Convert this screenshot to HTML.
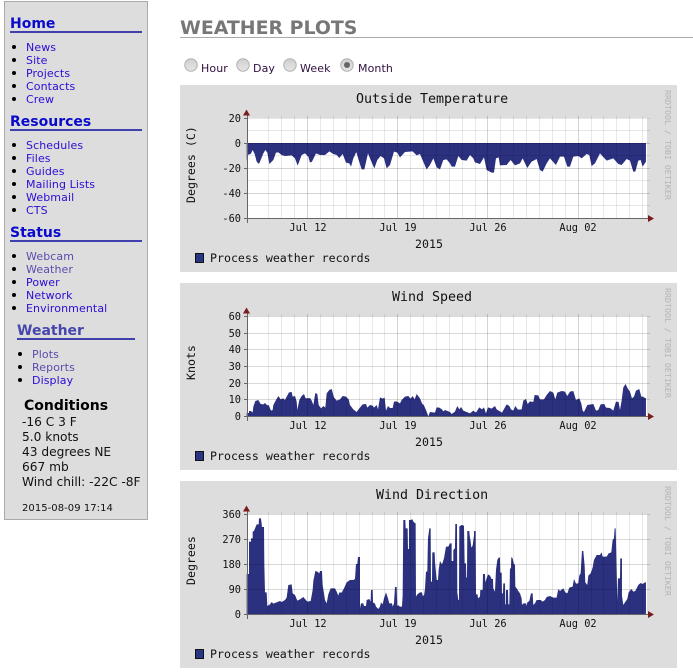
<!DOCTYPE html>
<html><head><meta charset="utf-8"><title>Weather Plots</title>
<style>
html,body{margin:0;padding:0;background:#fff;width:693px;height:672px;overflow:hidden}
body{position:relative;font-family:"DejaVu Sans","Liberation Sans",sans-serif;color:#111}
.t{position:absolute;white-space:nowrap;line-height:16px;font-size:11px;letter-spacing:.1px;margin-top:1px}
.l{color:#2a0cd6}.v{color:#5b4cae}
.h{font-weight:bold;font-size:14px;color:#0a0acb;letter-spacing:0}
.r{position:absolute;height:2px;background:#3f3fae}
.b{position:absolute;width:4px;height:4px;border-radius:50%;background:#000}
.c{font-size:12.2px;letter-spacing:0;color:#111}
svg{position:absolute;left:0;top:0}
svg text{font-family:"DejaVu Sans Mono","Liberation Mono",monospace;fill:#111}
</style></head><body>
<div style="position:absolute;left:4px;top:1px;width:142px;height:517px;background:#ddd;border:1px solid #aaa"></div>
<div class="t h" style="left:10px;top:15px">Home</div><div class="r" style="left:10px;top:31px;width:132px"></div>
<div class="b" style="left:12px;top:45px"></div><div class="t l" style="left:26px;top:39px">News</div>
<div class="b" style="left:12px;top:58px"></div><div class="t l" style="left:26px;top:52px">Site</div>
<div class="b" style="left:12px;top:71px"></div><div class="t l" style="left:26px;top:65px">Projects</div>
<div class="b" style="left:12px;top:84px"></div><div class="t l" style="left:26px;top:78px">Contacts</div>
<div class="b" style="left:12px;top:97px"></div><div class="t l" style="left:26px;top:91px">Crew</div>
<div class="t h" style="left:10px;top:113px">Resources</div><div class="r" style="left:10px;top:129px;width:132px"></div>
<div class="b" style="left:12px;top:143px"></div><div class="t l" style="left:26px;top:137px">Schedules</div>
<div class="b" style="left:12px;top:156px"></div><div class="t l" style="left:26px;top:150px">Files</div>
<div class="b" style="left:12px;top:169px"></div><div class="t l" style="left:26px;top:163px">Guides</div>
<div class="b" style="left:12px;top:182px"></div><div class="t l" style="left:26px;top:176px">Mailing Lists</div>
<div class="b" style="left:12px;top:195px"></div><div class="t l" style="left:26px;top:189px">Webmail</div>
<div class="b" style="left:12px;top:208px"></div><div class="t l" style="left:26px;top:202px">CTS</div>
<div class="t h" style="left:10px;top:224px">Status</div><div class="r" style="left:10px;top:240px;width:132px"></div>
<div class="b" style="left:12px;top:254px"></div><div class="t v" style="left:26px;top:248px">Webcam</div>
<div class="b" style="left:12px;top:267px"></div><div class="t v" style="left:26px;top:261px">Weather</div>
<div class="b" style="left:12px;top:280px"></div><div class="t l" style="left:26px;top:274px">Power</div>
<div class="b" style="left:12px;top:293px"></div><div class="t l" style="left:26px;top:287px">Network</div>
<div class="b" style="left:12px;top:306px"></div><div class="t l" style="left:26px;top:300px">Environmental</div>
<div class="t h" style="left:17px;top:322px;color:#4646ad">Weather</div><div class="r" style="left:17px;top:338px;width:118px"></div>
<div class="b" style="left:18px;top:352px"></div><div class="t v" style="left:32px;top:346px">Plots</div>
<div class="b" style="left:18px;top:365px"></div><div class="t v" style="left:32px;top:359px">Reports</div>
<div class="b" style="left:18px;top:378px"></div><div class="t l" style="left:32px;top:372px">Display</div>
<div class="t" style="left:24px;top:397px;font-weight:bold;font-size:14px;color:#000;letter-spacing:0">Conditions</div>
<div class="t c" style="left:22px;top:413px">-16 C 3 F</div>
<div class="t c" style="left:22px;top:428px">5.0 knots</div>
<div class="t c" style="left:22px;top:443px">43 degrees NE</div>
<div class="t c" style="left:22px;top:458px">667 mb</div>
<div class="t c" style="left:22px;top:473px">Wind chill: -22C -8F</div>
<div class="t" style="left:22px;top:500px;font-size:10px;letter-spacing:.05px">2015-08-09 17:14</div>

<div class="t" style="left:180px;top:18px;font-weight:bold;font-size:18.9px;line-height:18px;color:#777;letter-spacing:0">WEATHER PLOTS</div>
<div style="position:absolute;left:180px;top:37px;width:513px;height:1px;background:#aaa"></div>

<div class="t" style="left:201px;top:60px;color:#301040">Hour</div>
<div class="t" style="left:253px;top:60px;color:#301040">Day</div>
<div class="t" style="left:300px;top:60px;color:#301040">Week</div>
<div class="t" style="left:358px;top:60px;color:#301040">Month</div>

<svg width="693" height="672" viewBox="0 0 693 672">
<defs>
<linearGradient id="rg" x1="0" y1="0" x2="0" y2="1"><stop offset="0" stop-color="#cfcfcf"/><stop offset="1" stop-color="#e6e6e6"/></linearGradient>
<path id="vg1" fill="none" stroke="#000" stroke-opacity=".09" d="M268.5 0V102M281.5 0V102M294.5 0V102M320.5 0V102M333.5 0V102M346.5 0V102M359.5 0V102M372.5 0V102M384.5 0V102M410.5 0V102M423.5 0V102M436.5 0V102M449.5 0V102M462.5 0V102M475.5 0V102M500.5 0V102M513.5 0V102M526.5 0V102M539.5 0V102M552.5 0V102M565.5 0V102M591.5 0V102M603.5 0V102M616.5 0V102M629.5 0V102M642.5 0V102"/>
<path id="vg2" fill="none" stroke="#000" stroke-opacity=".17" d="M307.5 0V102M397.5 0V102M487.5 0V102M578.5 0V102"/>
<g id="axis">
<path d="M247.5 -4V105M244 100.5H649" stroke="#666" fill="none"/>
<path d="M243 -2.500L246.500 -8.500L250 -2.500ZM648 97L654 100.5L648 104Z" fill="#7a1c1c"/>
</g>
</defs>
<g stroke="#b0b0b0" fill="url(#rg)"><circle cx="191" cy="65" r="6.2"/><circle cx="243" cy="65" r="6.2"/><circle cx="290" cy="65" r="6.2"/><circle cx="347" cy="65" r="6.2"/></g>
<circle cx="347" cy="65" r="3" fill="#666"/>

<!-- PANEL 1 -->
<rect x="180" y="85" width="497" height="187" fill="#ddd"/>
<rect x="247" y="118" width="400" height="100" fill="#fff"/>
<polygon fill="#2b307f" transform="translate(240,130) scale(.3333)" points="20,39 20,95 22,75 32,72 38,60 44,72 50,95 57,102 62,90 70,70 76,60 82,68 88,102 100,90 108,68 115,67 125,75 135,78 155,76 165,85 173,107 185,75 195,70 205,80 210,98 216,95 228,70 240,75 255,75 268,64 280,72 290,75 298,84 308,72 318,98 328,100 333,110 340,85 349,66 356,90 365,118 373,118 384,70 392,90 403,115 412,90 422,78 432,85 440,115 450,105 462,65 472,68 480,82 495,66 518,64 530,76 540,72 552,100 560,118 570,105 580,85 590,112 600,118 610,90 620,88 630,100 635,110 645,110 655,78 665,90 680,92 690,75 700,85 705,97 720,102 732,82 740,120 755,128 762,128 768,85 776,82 780,106 800,105 812,90 825,106 840,100 848,85 862,114 875,95 890,87 900,120 908,125 920,100 930,85 948,105 960,80 972,80 982,110 990,110 1000,80 1015,78 1025,85 1040,72 1048,75 1055,108 1065,100 1080,70 1100,92 1120,85 1135,102 1145,105 1160,87 1170,92 1180,125 1186,125 1195,92 1202,90 1208,110 1218,95 1218,39"/>
<use href="#vg1" y="116"/><use href="#vg2" y="116"/>
<path fill="none" stroke="#000" stroke-opacity=".09" d="M247 118.5H650M247 130.5H650M247 155.5H650M247 180.5H650M247 205.5H650"/>
<path fill="none" stroke="#000" stroke-opacity=".17" d="M247 143.5H650M247 168.5H650M247 193.5H650"/>
<use href="#axis" y="118"/>
<path stroke="#666" d="M244 118.5H247M244 143.5H247M244 168.5H247M244 193.5H247"/>
<text x="356" y="103" font-size="13.3">Outside Temperature</text>
<g font-size="10.3" text-anchor="end"><text x="241" y="122">20</text><text x="241" y="147">0</text><text x="241" y="172">-20</text><text x="241" y="197">-40</text><text x="241" y="222">-60</text></g>
<g font-size="10.3" text-anchor="middle"><text x="308" y="231">Jul 12</text><text x="398" y="231">Jul 19</text><text x="488" y="231">Jul 26</text><text x="578" y="231">Aug 02</text></g>
<text x="415" y="248" font-size="11.6">2015</text>
<rect x="195.500" y="253.500" width="8" height="9" fill="#2b3585" stroke="#111"/>
<text x="210" y="262" font-size="11.6">Process weather records</text>
<text transform="translate(195,203) rotate(-90)" font-size="11.6">Degrees (C)</text>
<text transform="translate(665,90) rotate(90)" font-size="8.3" style="fill:#b4b4b4">RRDTOOL / TOBI OETIKER</text>

<!-- PANEL 2 -->
<rect x="180" y="283" width="497" height="187" fill="#ddd"/>
<rect x="247" y="316" width="400" height="100" fill="#fff"/>
<polygon fill="#2b307f" transform="translate(240,340) scale(.3333)" points="20,229 20,219 27,219 27,213 33,213 38,218 40,200 46,183 55,180 62,192 70,193 75,189 82,196 86,195 93,212 98,210 100,195 108,180 115,168 122,178 130,175 135,180 140,170 147,157 155,156 158,170 165,168 170,185 172,210 178,180 185,168 192,162 197,175 210,174 215,182 220,195 226,159 232,162 236,195 243,205 250,198 256,203 260,160 268,150 275,147 282,172 290,182 300,178 308,168 318,170 326,178 330,195 340,208 350,216 358,205 368,193 378,192 382,203 390,195 398,197 402,203 410,195 414,208 420,172 428,176 434,173 438,212 444,198 450,204 458,204 462,185 470,184 480,190 485,180 495,170 505,168 512,176 518,168 524,178 530,162 540,175 546,190 552,196 560,215 565,229 570,216 585,218 590,202 598,203 606,208 610,214 615,210 630,216 635,222 645,215 652,198 658,208 663,201 670,212 680,216 690,220 700,212 708,218 718,202 726,208 732,202 738,220 744,202 755,206 765,198 770,208 780,214 786,218 800,193 808,198 813,208 820,212 826,198 834,209 845,208 850,182 858,177 863,192 870,184 880,186 884,165 895,166 900,178 912,178 920,165 930,153 940,158 946,178 952,158 965,153 975,155 982,168 990,155 1000,153 1008,180 1018,175 1024,190 1028,212 1032,216 1042,195 1060,192 1068,212 1075,210 1082,193 1093,192 1098,203 1110,204 1120,212 1128,185 1136,186 1140,210 1145,182 1150,142 1157,132 1163,145 1170,155 1176,175 1182,170 1188,152 1198,147 1204,170 1208,170 1218,175 1218,229"/>
<use href="#vg1" y="314"/><use href="#vg2" y="314"/>
<path fill="none" stroke="#000" stroke-opacity=".15" d="M247 316.500H650M247 333.500H650M247 349.500H650M247 366.500H650M247 383.500H650M247 399.500H650"/>
<use href="#axis" y="316"/>
<path stroke="#666" d="M244 316.500H247M244 333.500H247M244 349.500H247M244 366.500H247M244 383.500H247M244 399.500H247"/>
<text x="392" y="301" font-size="13.3">Wind Speed</text>
<g font-size="10.3" text-anchor="end"><text x="241" y="320">60</text><text x="241" y="337">50</text><text x="241" y="353">40</text><text x="241" y="370">30</text><text x="241" y="387">20</text><text x="241" y="403">10</text><text x="241" y="420">0</text></g>
<g font-size="10.3" text-anchor="middle"><text x="308" y="429">Jul 12</text><text x="398" y="429">Jul 19</text><text x="488" y="429">Jul 26</text><text x="578" y="429">Aug 02</text></g>
<text x="415" y="446" font-size="11.6">2015</text>
<rect x="195.500" y="451.500" width="8" height="9" fill="#2b3585" stroke="#111"/>
<text x="210" y="460" font-size="11.6">Process weather records</text>
<text transform="translate(195,380) rotate(-90)" font-size="11.6">Knots</text>
<text transform="translate(665,288) rotate(90)" font-size="8.3" style="fill:#b4b4b4">RRDTOOL / TOBI OETIKER</text>

<!-- PANEL 3 -->
<rect x="180" y="481" width="497" height="187" fill="#ddd"/>
<rect x="247" y="514" width="400" height="100" fill="#fff"/>
<polygon fill="#2b307f" transform="translate(240,505) scale(.3333)" points="20,328 20,207 27,207 27,110 33,110 33,100 38,100 38,80 42,78 46,68 50,58 56,58 57,40 63,40 66,66 72,66 73,180 75,262 80,262 82,303 90,298 95,291 100,296 110,292 120,288 125,291 135,285 140,278 145,240 155,238 158,265 165,270 172,287 180,283 190,276 195,282 202,290 212,288 218,255 220,228 226,198 232,200 238,205 240,198 246,198 248,240 252,265 255,285 260,295 265,268 272,250 285,250 290,260 295,272 298,262 305,263 312,250 320,232 330,225 340,225 345,222 348,177 352,177 354,156 360,156 360,310 363,295 370,295 372,303 378,303 380,285 388,282 392,290 393,255 398,255 399,292 405,296 408,305 415,312 420,305 423,292 428,298 432,280 438,262 444,280 448,295 456,295 458,305 462,295 465,246 470,246 472,305 474,300 480,305 486,305 488,270 490,45 496,45 497,70 503,70 504,132 507,132 507,45 513,45 516,42 522,52 527,55 528,275 532,268 540,262 546,262 548,272 552,272 555,252 558,200 562,200 564,100 568,70 572,70 573,230 576,230 577,142 584,142 585,170 590,225 594,225 596,195 600,168 606,178 612,160 618,125 625,125 630,115 635,115 635,168 640,168 640,135 645,130 646,57 651,57 652,262 655,285 657,285 658,65 664,60 672,62 674,175 678,175 679,218 681,218 682,78 688,78 689,92 692,110 694,128 698,122 702,92 702,78 707,78 708,268 713,268 714,280 720,275 721,255 728,255 729,207 735,207 736,232 740,220 744,208 750,212 755,222 759,222 760,250 765,260 768,195 772,165 776,158 780,158 781,203 785,203 786,265 789,265 790,235 795,235 796,298 798,298 798,255 804,255 805,298 808,298 810,190 813,190 814,156 818,160 822,178 825,178 826,245 830,250 835,258 840,265 845,280 846,300 850,295 858,295 860,303 862,292 868,288 873,265 878,265 880,300 885,295 890,285 902,285 908,290 915,285 920,276 930,273 940,278 950,278 955,252 960,258 970,250 976,262 982,265 988,248 998,245 1002,222 1008,236 1015,235 1018,212 1022,205 1026,138 1030,138 1034,182 1036,232 1042,240 1045,212 1052,205 1058,188 1062,165 1070,150 1080,150 1085,142 1088,155 1100,155 1106,145 1114,142 1118,105 1122,100 1124,70 1127,70 1128,105 1132,288 1134,220 1140,220 1141,160 1146,160 1146,272 1150,300 1155,292 1162,282 1166,262 1174,252 1180,260 1186,258 1195,240 1202,234 1208,237 1215,232 1218,232 1218,328"/>
<use href="#vg1" y="512"/><use href="#vg2" y="512"/>
<path fill="none" stroke="#000" stroke-opacity=".15" d="M247 514.500H650M247 539.500H650M247 564.500H650M247 589.500H650"/>
<use href="#axis" y="514"/>
<path stroke="#666" d="M244 514.500H247M244 539.500H247M244 564.500H247M244 589.500H247"/>
<text x="376" y="499" font-size="13.3">Wind Direction</text>
<g font-size="10.3" text-anchor="end"><text x="241" y="518">360</text><text x="241" y="543">270</text><text x="241" y="568">180</text><text x="241" y="593">90</text><text x="241" y="618">0</text></g>
<g font-size="10.3" text-anchor="middle"><text x="308" y="627">Jul 12</text><text x="398" y="627">Jul 19</text><text x="488" y="627">Jul 26</text><text x="578" y="627">Aug 02</text></g>
<text x="415" y="644" font-size="11.6">2015</text>
<rect x="195.500" y="649.500" width="8" height="9" fill="#2b3585" stroke="#111"/>
<text x="210" y="658" font-size="11.6">Process weather records</text>
<text transform="translate(195,585) rotate(-90)" font-size="11.6">Degrees</text>
<text transform="translate(665,486) rotate(90)" font-size="8.3" style="fill:#b4b4b4">RRDTOOL / TOBI OETIKER</text>
</svg>
</body></html>
